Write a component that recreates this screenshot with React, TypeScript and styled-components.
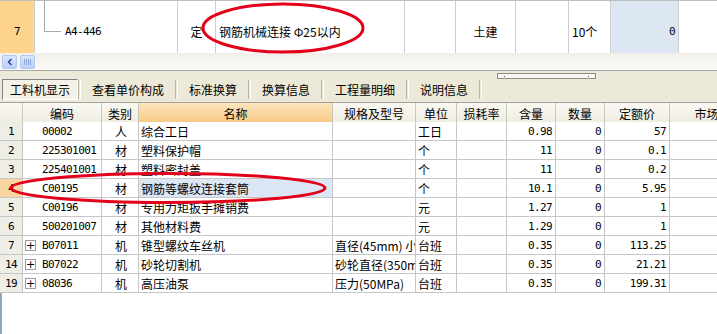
import React from 'react';
import styled, { createGlobalStyle } from 'styled-components';

const GlobalStyle = createGlobalStyle`
  html, body {
    margin: 0;
    padding: 0;
    background: #fff;
  }
  body {
    font-family: "Noto Sans CJK SC", "DejaVu Sans", sans-serif;
    font-size: 12px;
    color: #000;
  }
`;

const NUM_FONT = `"DejaVu Sans Mono", "Liberation Mono", monospace`;
const GRID_LINE = '#c6c6c6';

type Align = 'left' | 'center' | 'right';

//style
const Frame = styled.div`
  position: relative;
  display: flex;
  flex-direction: column;
  width: 717px;
  height: 334px;
  overflow: hidden;
  background: #fff;
`;

const QuotaRow = styled.div`
  display: grid;
  grid-template-columns: 35px 143px 38px 189px 51px 60px 53px 42px 68px 60px;
  height: 53px;
  border-top: 1px solid #bdbdbd;
  box-sizing: border-box;
  flex-shrink: 0;
`;

const QuotaCell = styled.div<{ $align?: Align; $bg?: string; $mono?: boolean }>`
  display: flex;
  align-items: center;
  justify-content: ${(p) => (p.$align === 'right' ? 'flex-end' : p.$align === 'center' ? 'center' : 'flex-start')};
  padding: 9px 3px 0;
  box-sizing: border-box;
  border-right: 1px solid #cfcfcf;
  background: ${(p) => p.$bg || '#fff'};
  font-family: ${(p) => (p.$mono ? NUM_FONT : 'inherit')};
  font-size: ${(p) => (p.$mono ? '11px' : '12px')};
  letter-spacing: ${(p) => (p.$mono ? '-0.6px' : '0')};
  white-space: nowrap;
  overflow: hidden;
`;

const TreeElbow = styled.span`
  align-self: flex-start;
  flex-shrink: 0;
  width: 17px;
  height: 31px;
  margin: -9px 4px 0 9px;
  border-left: 1px solid #a8a8a8;
  border-bottom: 1px solid #a8a8a8;
  box-sizing: border-box;
`;

const ScrollStrip = styled.div`
  display: flex;
  align-items: center;
  gap: 3px;
  height: 18px;
  padding: 1px 2px 0;
  box-sizing: border-box;
  border-bottom: 1px solid #a9a8a4;
  background: linear-gradient(#f1efe9, #fbfbf9);
  flex-shrink: 0;
`;

const ScrollButton = styled.div`
  display: flex;
  align-items: center;
  justify-content: center;
  width: 15px;
  height: 14px;
  box-sizing: border-box;
  border: 1px solid #b4c7ef;
  border-radius: 2px;
  background: linear-gradient(#d9e5fd, #bcd0fa);
`;

const TabBar = styled.div`
  position: relative;
  display: flex;
  align-items: stretch;
  height: 32px;
  padding: 8px 0 2px 2px;
  box-sizing: border-box;
  background: #ece9d8;
  border-bottom: 1px solid #a5a397;
  flex-shrink: 0;
`;

const Tab = styled.div<{ $active?: boolean }>`
  display: flex;
  align-items: center;
  padding: ${(p) => (p.$active ? '0 7px' : '0 10px')};
  box-sizing: border-box;
  font-size: 12px;
  white-space: nowrap;
  border: 1px solid transparent;
  border-color: ${(p) => (p.$active ? '#808080 #ffffff #ffffff #808080' : 'transparent')};
  background: ${(p) => (p.$active ? '#f4f2e8' : 'transparent')};
`;

const TabSeparator = styled.div`
  width: 1px;
  margin: 1px 0;
  border-left: 1px solid #b8b5a4;
  border-right: 1px solid #ffffff;
`;

const SplitterGrip = styled.div`
  position: absolute;
  left: 497px;
  top: 2px;
  display: flex;
  align-items: center;
  justify-content: space-between;
  width: 99px;
  height: 6px;
  padding: 0 6px;
  box-sizing: border-box;
  border: 1px solid #8d8b80;
  background: #f6f5ef;

  span {
    width: 1px;
    height: 1px;
    background: #555;
  }
`;

const GRID_COLS = '23px 79px 37px 194px 83px 41px 50px 49px 49px 65px 86px';

const Grid = styled.div`
  display: grid;
  grid-template-columns: ${GRID_COLS};
  grid-auto-rows: 19px;
  flex-shrink: 0;
`;

const HeadCell = styled.div<{ $active?: boolean }>`
  display: flex;
  align-items: center;
  justify-content: center;
  height: 22px;
  box-sizing: border-box;
  border-right: 1px solid #cbc8b8;
  border-bottom: 1px solid #b9b7a9;
  background: ${(p) =>
    p.$active ? 'linear-gradient(#fce6bf, #f7c77e)' : 'linear-gradient(#f9f8f3, #eeecdf)'};
  white-space: nowrap;
  overflow: hidden;
`;

const Cell = styled.div<{ $align?: Align; $mono?: boolean; $bg?: string; $pad?: number }>`
  display: flex;
  align-items: center;
  justify-content: ${(p) => (p.$align === 'right' ? 'flex-end' : p.$align === 'center' ? 'center' : 'flex-start')};
  padding: 0 ${(p) => (p.$align === 'right' ? 3 : 0)}px 0 ${(p) => p.$pad ?? 2}px;
  box-sizing: border-box;
  border-right: 1px solid ${GRID_LINE};
  border-bottom: 1px solid ${GRID_LINE};
  background: ${(p) => p.$bg || '#fff'};
  font-family: ${(p) => (p.$mono ? NUM_FONT : 'inherit')};
  font-size: ${(p) => (p.$mono ? '11px' : '12px')};
  letter-spacing: ${(p) => (p.$mono ? '-0.6px' : '0')};
  white-space: nowrap;
  overflow: hidden;
`;

const SpecText = styled.span`
  display: block;
  width: 100%;
  overflow: hidden;
  white-space: nowrap;
  text-overflow: clip;
`;

const Expander = styled.span`
  display: flex;
  align-items: center;
  justify-content: center;
  flex-shrink: 0;
  width: 11px;
  height: 11px;
  margin-right: 6px;
  box-sizing: border-box;
  border: 1px solid #9c9c9c;
  background: #fff;
  font-family: "DejaVu Sans", sans-serif;
  font-size: 11px;
  letter-spacing: 0;
  line-height: 1;
`;

const Filler = styled.div`
  flex: 1;
  border-left: 2px solid #94a6bf;
`;

const Overlay = styled.svg`
  position: absolute;
  left: 0;
  top: 0;
  pointer-events: none;
`;

interface Row {
  n: string;
  code: string;
  type: string;
  name: string;
  spec?: string;
  unit: string;
  qty: string;
  price: string;
  expand?: boolean;
  selected?: boolean;
}

const rows: Row[] = [
  { n: '1', code: '00002', type: '人', name: '综合工日', unit: '工日', qty: '0.98', price: '57' },
  { n: '2', code: '225301001', type: '材', name: '塑料保护帽', unit: '个', qty: '11', price: '0.1' },
  { n: '3', code: '225401001', type: '材', name: '塑料密封盖', unit: '个', qty: '11', price: '0.2' },
  { n: '4', code: 'C00195', type: '材', name: '钢筋等螺纹连接套筒', unit: '个', qty: '10.1', price: '5.95', selected: true },
  { n: '5', code: 'C00196', type: '材', name: '专用力矩扳手摊销费', unit: '元', qty: '1.27', price: '1' },
  { n: '6', code: '500201007', type: '材', name: '其他材料费', unit: '元', qty: '1.29', price: '1' },
  { n: '7', code: 'B07011', type: '机', name: '锥型螺纹车丝机', spec: '直径(45mm) 小型', unit: '台班', qty: '0.35', price: '113.25', expand: true },
  { n: '14', code: 'B07022', type: '机', name: '砂轮切割机', spec: '砂轮直径(350mm)', unit: '台班', qty: '0.35', price: '21.21', expand: true },
  { n: '19', code: '08036', type: '机', name: '高压油泵', spec: '压力(50MPa)', unit: '台班', qty: '0.35', price: '199.31', expand: true },
];

const headers = ['', '编码', '类别', '名称', '规格及型号', '单位', '损耗率', '含量', '数量', '定额价', '市场价'];
const tabs = ['工料机显示', '查看单价构成', '标准换算', '换算信息', '工程量明细', '说明信息'];

function App() {
  return (
    <>
      <GlobalStyle />
      <Frame>
        <QuotaRow>
          <QuotaCell $align="center" $bg="#fdd38e" $mono>7</QuotaCell>
          <QuotaCell $mono style={{ paddingLeft: 0 }}>
            <TreeElbow />
            A4-446
          </QuotaCell>
          <QuotaCell $align="center">定</QuotaCell>
          <QuotaCell>钢筋机械连接 Φ25以内</QuotaCell>
          <QuotaCell />
          <QuotaCell $align="center">土建</QuotaCell>
          <QuotaCell />
          <QuotaCell>10个</QuotaCell>
          <QuotaCell $align="right" $bg="#dde6f3" $mono>0</QuotaCell>
          <QuotaCell />
        </QuotaRow>

        <ScrollStrip>
          <ScrollButton>
            <svg width="8" height="8" viewBox="0 0 8 8">
              <path d="M5.5 1 L2.5 4 L5.5 7" fill="none" stroke="#33449a" strokeWidth="1.6" />
            </svg>
          </ScrollButton>
          <ScrollButton>
            <svg width="7" height="6" viewBox="0 0 7 6">
              <path d="M0.5 0 V6 M2.5 0 V6 M4.5 0 V6 M6.5 0 V6" stroke="#8ea6dc" strokeWidth="1" />
            </svg>
          </ScrollButton>
        </ScrollStrip>

        <TabBar>
          {tabs.map((t, i) => (
            <React.Fragment key={t}>
              <Tab $active={i === 0}>{t}</Tab>
              <TabSeparator />
            </React.Fragment>
          ))}
          <SplitterGrip>
            <span />
            <span />
          </SplitterGrip>
        </TabBar>

        <Grid>
          {headers.map((h, i) => (
            <HeadCell key={i} $active={i === 3}>
              {h}
            </HeadCell>
          ))}
          {rows.map((r) => (
            <React.Fragment key={r.n}>
              <Cell $align="center" $mono $bg={r.selected ? '#f9d59f' : '#efeee6'} $pad={0}>
                {r.n}
              </Cell>
              <Cell $mono $pad={r.expand ? 2 : 19}>
                {r.expand && <Expander>+</Expander>}
                {r.code}
              </Cell>
              <Cell $align="center">{r.type}</Cell>
              <Cell $bg={r.selected ? '#dde6f4' : undefined}>{r.name}</Cell>
              <Cell>{r.spec && <SpecText>{r.spec}</SpecText>}</Cell>
              <Cell>{r.unit}</Cell>
              <Cell />
              <Cell $align="right" $mono>{r.qty}</Cell>
              <Cell $align="right" $mono>0</Cell>
              <Cell $align="right" $mono>{r.price}</Cell>
              <Cell />
            </React.Fragment>
          ))}
        </Grid>

        <Filler />

        <Overlay width="717" height="334" viewBox="0 0 717 334">
          <ellipse cx="283" cy="28" rx="80" ry="24" fill="none" stroke="#e3001b" strokeWidth="3" />
          <ellipse cx="168" cy="188" rx="157" ry="14.5" fill="none" stroke="#e3001b" strokeWidth="3" />
        </Overlay>
      </Frame>
    </>
  );
}

export default App;
